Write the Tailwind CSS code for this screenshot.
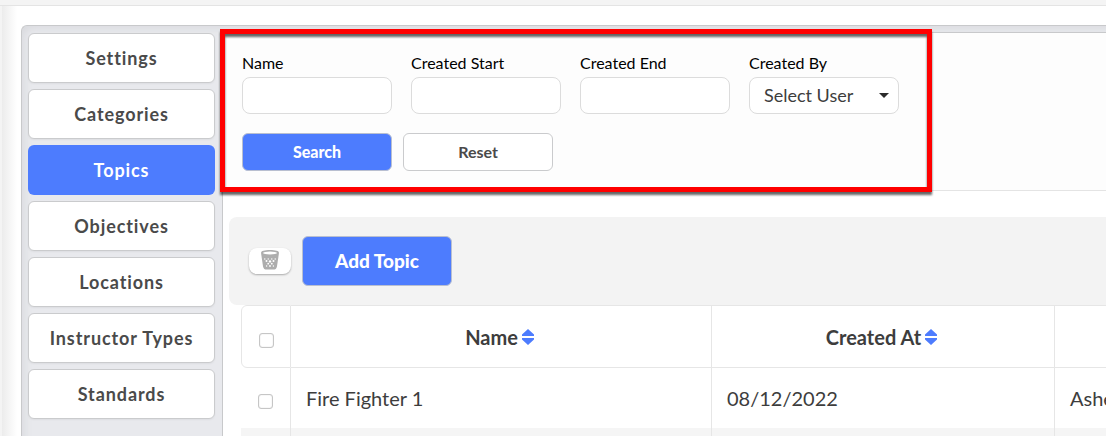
<!DOCTYPE html>
<html lang="en">
<head>
    <meta charset="UTF-8">
    <meta name="viewport" content="width=device-width, initial-scale=1.0">
    <title>Topics</title>
    <script src="https://cdn.jsdelivr.net/npm/@tailwindcss/browser@4"></script>
    <style>
        body { font-family: Lato, 'Open Sans', sans-serif; }
    </style>
</head>
<body class="h-screen overflow-hidden flex flex-col bg-white text-[#3d3d3d]">
    <div class="h-[6px] shrink-0 bg-[#f4f4f4] border-b border-[#e4e4e4]"></div>

    <div class="flex flex-1 min-h-0 overflow-hidden">
        <!-- Page edge shadow -->
        <div class="w-[21px] shrink-0 border-l-2 border-[#f4f4f4] bg-linear-to-r from-[#ececec] to-white to-80%"></div>

        <div class="mt-[19px] flex flex-1 min-w-0 rounded-tl-md border-t border-l border-[#c8c9cb] bg-[#e8e9ed] shadow-[inset_6px_6px_8px_-4px_#d9dade]">
            <!-- Sidebar -->
            <nav class="w-[200px] shrink-0 flex flex-col gap-[6px] pt-[7px] pl-[6px] pr-[7px] text-lg font-bold tracking-wider text-[#4a4a4a]">
                <button type="button" class="h-[50px] shrink-0 pb-px rounded-md border border-[#cacbcd] bg-white shadow-xs">Settings</button>
                <button type="button" class="h-[50px] shrink-0 pb-px rounded-md border border-[#cacbcd] bg-white shadow-xs">Categories</button>
                <button type="button" class="h-[50px] shrink-0 pb-px rounded-md bg-[#4d7cfe] text-white">Topics</button>
                <button type="button" class="h-[50px] shrink-0 pb-px rounded-md border border-[#cacbcd] bg-white shadow-xs">Objectives</button>
                <button type="button" class="h-[50px] shrink-0 pb-px rounded-md border border-[#cacbcd] bg-white shadow-xs">Locations</button>
                <button type="button" class="h-[50px] shrink-0 pb-px rounded-md border border-[#cacbcd] bg-white shadow-xs">Instructor Types</button>
                <button type="button" class="h-[50px] shrink-0 pb-px rounded-md border border-[#cacbcd] bg-white shadow-xs">Standards</button>
            </nav>

            <main class="mt-[6px] flex-1 min-w-0 border-t border-l border-[#c8c9cb] bg-white">
                <!-- Filters -->
                <form class="relative bg-[#fdfdfd] border-b border-[#e4e4e4] pt-[20px] pb-[19px] pl-[19px]">
                    <div class="flex gap-[19px]">
                        <div class="w-[150px]">
                            <label for="name" class="block h-6 leading-5 text-base text-black">Name</label>
                            <input type="text" id="name" class="block w-full h-[37px] px-3 rounded-lg border border-[#dcdcdc] bg-white">
                        </div>
                        <div class="w-[150px]">
                            <label for="created-start" class="block h-6 leading-5 text-base text-black">Created Start</label>
                            <input type="text" id="created-start" class="block w-full h-[37px] px-3 rounded-lg border border-[#dcdcdc] bg-white">
                        </div>
                        <div class="w-[150px]">
                            <label for="created-end" class="block h-6 leading-5 text-base text-black">Created End</label>
                            <input type="text" id="created-end" class="block w-full h-[37px] px-3 rounded-lg border border-[#dcdcdc] bg-white">
                        </div>
                        <div class="w-[150px]">
                            <label for="created-by" class="block h-6 leading-5 text-base text-black">Created By</label>
                            <div class="relative">
                                <select id="created-by" class="block w-full h-[37px] pl-[14px] pr-8 pb-[2px] rounded-lg border border-[#dcdcdc] bg-white appearance-none text-lg leading-6">
                                    <option>Select User</option>
                                </select>
                                <svg class="absolute right-[10px] top-4 w-[10px] h-[5px] pointer-events-none" viewBox="0 0 10 5" fill="#2b2b2b"><path d="M0 0h10L5 5z"/></svg>
                            </div>
                        </div>
                    </div>
                    <div class="flex gap-[11px] mt-[19px] text-base font-bold">
                        <button type="submit" class="w-[150px] h-[38px] rounded-md border border-[#b9bfd0] bg-[#4d7cfe] text-white font-black">Search</button>
                        <button type="reset" class="w-[150px] h-[38px] rounded-md border border-[#cacbcd] bg-white text-[#4a4a4a]">Reset</button>
                    </div>
                    <!-- Highlight frame -->
                    <div class="absolute -left-[3px] -top-1 -bottom-[2px] w-[712px] border-[5px] border-[#ff0000] pointer-events-none drop-shadow-[0_3px_1px_rgba(0,0,0,0.6)]"></div>
                </form>

                <!-- Toolbar -->
                <div class="mt-[26px] ml-[6px] h-[88px] flex items-center gap-[11px] pl-5 rounded-l-lg bg-[#f3f3f3]">
                    <button type="button" aria-label="Delete" class="w-[42px] h-[26px] flex justify-center pt-[2px] rounded-lg bg-white shadow-[0_1px_2px_rgba(0,0,0,0.3)]">
                        <svg class="w-[18px] h-[20px]" viewBox="0 0 18 20">
                            <path fill="#adadad" d="M0 2.8C0 .9 3.500 0 9 0s9 .9 9 2.800L16 16.200C15.600 18.700 14.400 19.600 12 19.600H6c-2.400 0-3.600-.9-4-3.400z"/>
                            <ellipse cx="9" cy="3" rx="7" ry="1.500" fill="#fff"/>
                            <g fill="#fff">
                                <circle cx="3.800" cy="9" r=".7"/><circle cx="7.200" cy="9" r=".7"/><circle cx="10.800" cy="9" r=".7"/><circle cx="14.200" cy="9" r=".7"/>
                                <circle cx="5.500" cy="11" r="1"/><circle cx="9" cy="11.400" r="1.200"/><circle cx="12.500" cy="11" r="1"/>
                                <circle cx="7.200" cy="13.700" r=".9"/><circle cx="10.800" cy="13.700" r=".9"/>
                                <circle cx="5.600" cy="16" r=".7"/><circle cx="9" cy="16" r=".9"/><circle cx="12.400" cy="16" r=".7"/>
                            </g>
                        </svg>
                    </button>
                    <button type="button" class="w-[150px] h-[50px] rounded-md border border-[#b9bfd0] bg-[#4d7cfe] text-white text-[19px] font-black">Add Topic</button>
                </div>

                <!-- Topics table -->
                <div class="ml-[18px] overflow-hidden">
                    <table class="table-fixed w-[1156px] border-separate border-spacing-0 text-xl">
                        <thead>
                            <tr class="h-[63px]">
                                <th class="w-[50px] border border-[#e6e6e6] rounded-l-md pt-2">
                                    <input type="checkbox" aria-label="Select all" class="block mx-auto w-[15px] h-[15px] appearance-none rounded-[3px] border border-[#c6c6c6] bg-white shadow-[inset_0_0_1px_#bbb]">
                                </th>
                                <th class="w-[421px] border-y border-r border-[#e6e6e6] pr-[3px] font-bold">
                                    <span class="inline-flex items-center gap-1">Name
                                        <svg class="w-3 h-4" viewBox="0 0 12 16" fill="#4d7cfe"><path d="M6 0l6 5.500V7H0V5.500zM0 9h12v1.500L6 16 0 10.500z"/></svg>
                                    </span>
                                </th>
                                <th class="w-[343px] border-y border-r border-[#e6e6e6] pr-[3px] font-bold">
                                    <span class="inline-flex items-center gap-1">Created At
                                        <svg class="w-3 h-4" viewBox="0 0 12 16" fill="#4d7cfe"><path d="M6 0l6 5.500V7H0V5.500zM0 9h12v1.500L6 16 0 10.500z"/></svg>
                                    </span>
                                </th>
                                <th class="border-y border-[#e6e6e6]"></th>
                            </tr>
                        </thead>
                        <tbody>
                            <tr class="h-[60px]">
                                <td class="border-r border-[#e6e6e6] pt-[6px]">
                                    <input type="checkbox" aria-label="Select Fire Fighter 1" class="block mx-auto w-[15px] h-[15px] appearance-none rounded-[3px] border border-[#c6c6c6] bg-white shadow-[inset_0_0_1px_#bbb]">
                                </td>
                                <td class="border-r border-[#e6e6e6] px-[15px]">Fire Fighter 1</td>
                                <td class="border-r border-[#e6e6e6] px-[15px]">08/12/2022</td>
                                <td class="px-[15px]">Ashe</td>
                            </tr>
                            <tr class="h-[60px] bg-[#f5f5f5]">
                                <td class="border-r border-[#e6e6e6]"></td>
                                <td class="border-r border-[#e6e6e6]"></td>
                                <td class="border-r border-[#e6e6e6]"></td>
                                <td></td>
                            </tr>
                        </tbody>
                    </table>
                </div>
            </main>
        </div>
    </div>
</body>
</html>
